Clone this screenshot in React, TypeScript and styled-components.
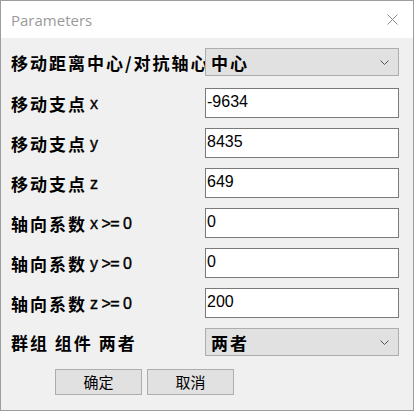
import React from 'react';
import styled, { createGlobalStyle } from 'styled-components';

const GlobalStyle = createGlobalStyle`
  html, body {
    margin: 0;
    padding: 0;
    background: #ffffff;
  }
`;

const Window = styled.div`
  width: 414px;
  height: 411px;
  box-sizing: border-box;
  border: 1px solid #9d9d9d;
  background: #f0f0f0;
  display: flex;
  flex-direction: column;
`;

const TitleBar = styled.div`
  height: 37px;
  flex-shrink: 0;
  background: #ffffff;
  display: flex;
  align-items: center;
  justify-content: space-between;
  padding: 0 15px 0 10px;
`;

const Title = styled.span`
  font-family: "Open Sans", "Noto Sans", sans-serif;
  font-size: 15px;
  color: #9a9a9a;
`;

const CloseIcon = styled.svg`
  width: 11px;
  height: 11px;
  display: block;
`;

const Form = styled.div`
  padding: 10px 0 0 10px;
`;

const Row = styled.div`
  display: grid;
  grid-template-columns: 194px 194px;
  height: 40px;
  align-items: start;
`;

const Label = styled.div<{ $h: number }>`
  height: ${(p) => p.$h}px;
  display: flex;
  align-items: center;
  font-family: "Noto Sans CJK SC", sans-serif;
  font-weight: 700;
  font-size: 17px;
  letter-spacing: 2px;
  color: #000000;
  white-space: pre;
`;

const Suffix = styled.span`
  font-family: "Liberation Sans", Arial, sans-serif;
  font-weight: 400;
  font-size: 16px;
  letter-spacing: -0.5px;
  margin-left: 3px;
  padding-top: 1px;
  -webkit-text-stroke: 0.4px #000000;
`;

const TextInput = styled.input`
  width: 194px;
  height: 30px;
  box-sizing: border-box;
  margin: 0;
  padding: 0 0 3px 1px;
  border: 1px solid #7a7a7a;
  background: #ffffff;
  font-family: "Liberation Sans", Arial, sans-serif;
  font-size: 16px;
  color: #000000;
  outline: none;
`;

const Select = styled.div`
  width: 194px;
  height: 28px;
  box-sizing: border-box;
  border: 1px solid #adadad;
  background: #e1e1e1;
  display: flex;
  align-items: center;
  justify-content: space-between;
  padding: 0 9px 0 5px;
  font-family: "Noto Sans CJK SC", sans-serif;
  font-weight: 700;
  font-size: 17px;
  letter-spacing: 2px;
  color: #000000;
`;

const Chevron = styled.svg`
  width: 9px;
  height: 5px;
  display: block;
`;

const Actions = styled.div`
  display: flex;
  gap: 5px;
  margin-top: 1px;
  padding-left: 44px;
`;

const Button = styled.button`
  width: 87px;
  height: 26px;
  box-sizing: border-box;
  margin: 0;
  padding: 0 0 1px;
  border: 1px solid #adadad;
  background: #e1e1e1;
  font-family: "Noto Sans CJK SC", sans-serif;
  font-size: 15px;
  color: #000000;
`;

type Field = {
  kind: 'select' | 'input';
  label: string;
  suffix?: string;
  value: string;
};

const fields: Field[] = [
  { kind: 'select', label: '移动距离中心/对抗轴心', value: '中心' },
  { kind: 'input', label: '移动支点', suffix: 'x', value: '-9634' },
  { kind: 'input', label: '移动支点', suffix: 'y', value: '8435' },
  { kind: 'input', label: '移动支点', suffix: 'z', value: '649' },
  { kind: 'input', label: '轴向系数', suffix: 'x >= 0', value: '0' },
  { kind: 'input', label: '轴向系数', suffix: 'y >= 0', value: '0' },
  { kind: 'input', label: '轴向系数', suffix: 'z >= 0', value: '200' },
  { kind: 'select', label: '群组 组件 两者', value: '两者' },
];

const App: React.FC = () => {
  return (
    <>
      <GlobalStyle />
      <Window>
        <TitleBar>
          <Title>Parameters</Title>
          <CloseIcon viewBox="0 0 11 11">
            <path d="M0.5 0.5 L10.5 10.5 M10.5 0.5 L0.5 10.5" stroke="#8a8a8a" strokeWidth="1" fill="none" />
          </CloseIcon>
        </TitleBar>
        <Form>
          {fields.map((f, i) => (
            <Row key={i}>
              <Label $h={f.kind === 'select' ? 28 : 30}>
                {f.label}
                {f.suffix && <Suffix>{f.suffix}</Suffix>}
              </Label>
              {f.kind === 'select' ? (
                <Select>
                  <span>{f.value}</span>
                  <Chevron viewBox="0 0 9 5">
                    <path d="M0.5 0.5 L4.5 4.5 L8.5 0.5" stroke="#555555" strokeWidth="1" fill="none" />
                  </Chevron>
                </Select>
              ) : (
                <TextInput defaultValue={f.value} />
              )}
            </Row>
          ))}
          <Actions>
            <Button>确定</Button>
            <Button>取消</Button>
          </Actions>
        </Form>
      </Window>
    </>
  );
};

export default App;
